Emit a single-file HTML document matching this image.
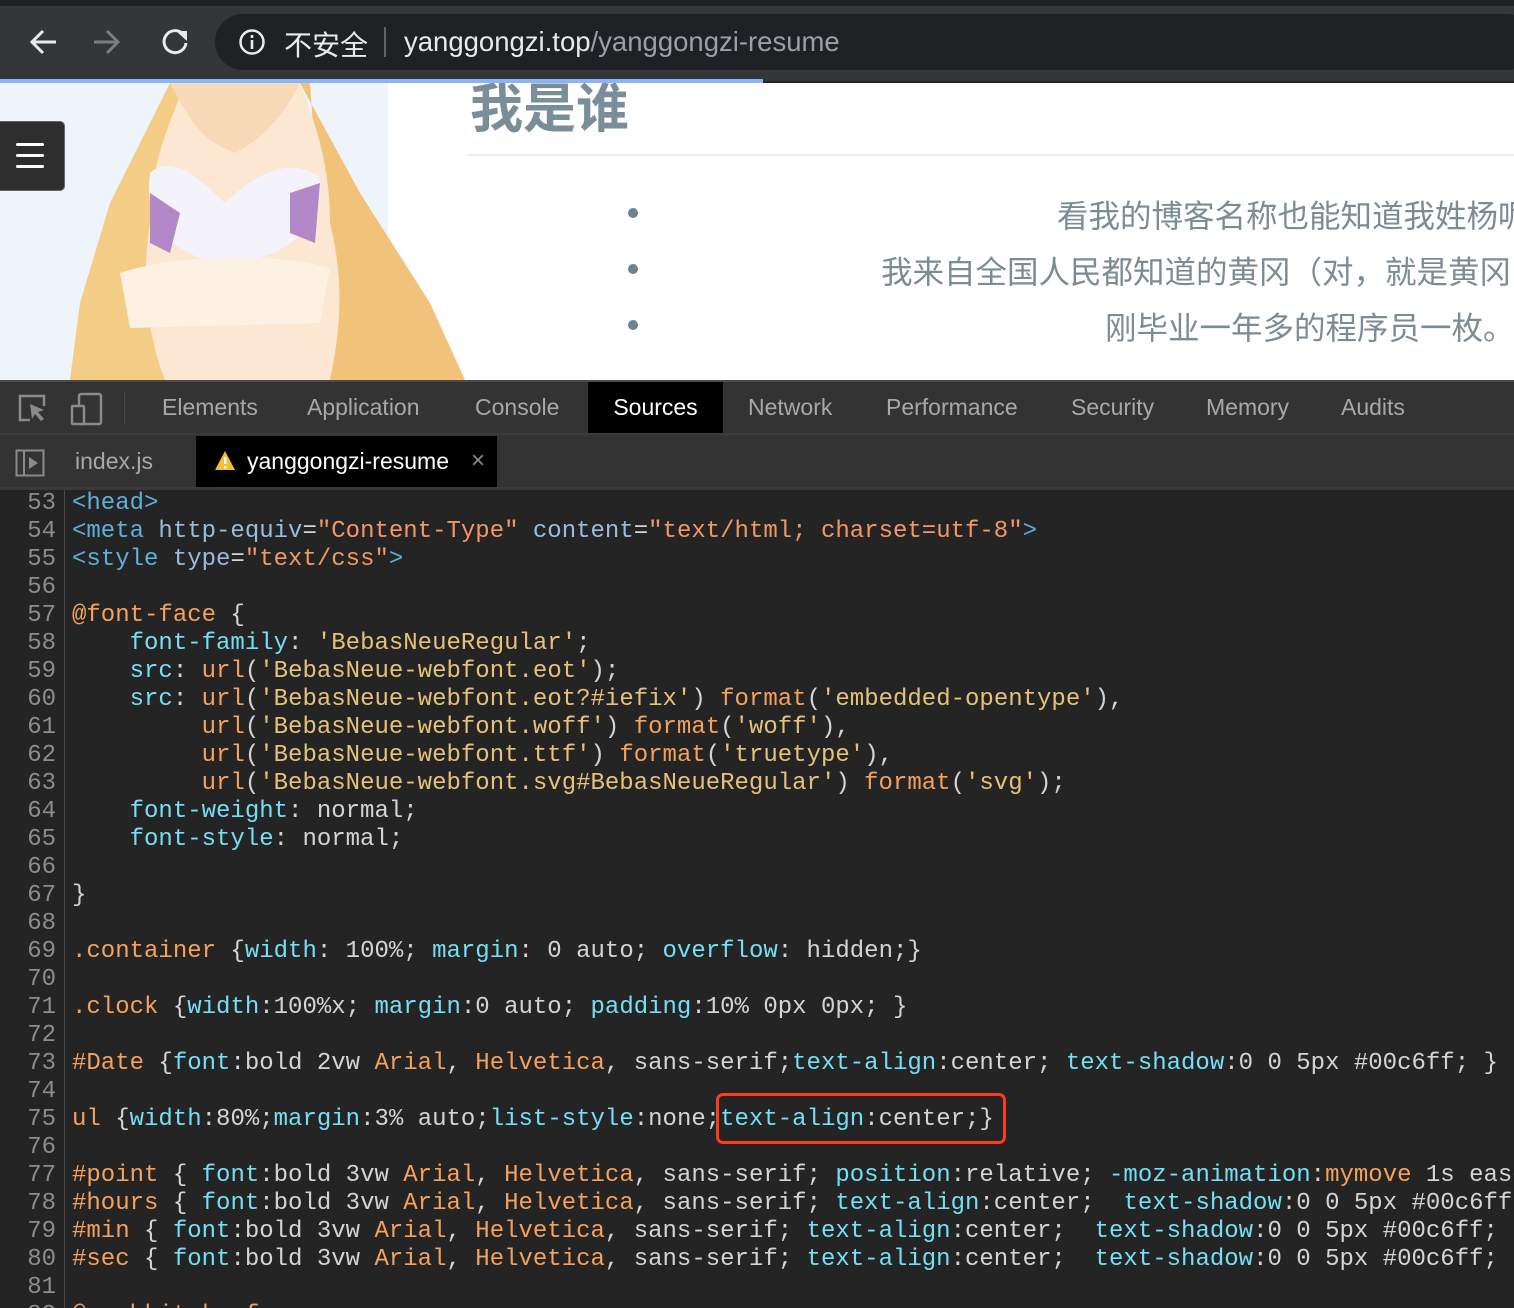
<!DOCTYPE html>
<html><head><meta charset="utf-8"><style>
*{margin:0;padding:0;box-sizing:border-box}
body{width:1514px;height:1308px;overflow:hidden;background:#242424;position:relative;font-family:"Liberation Sans","Noto Sans CJK SC",sans-serif}
.abs{position:absolute}
.top{left:0;top:0;width:1514px;height:80px;background:#35363a}
.page{left:0;top:83px;width:1514px;height:297px;background:#fff;overflow:hidden}
.tab{position:absolute;top:382px;height:51px;line-height:51px;font-size:23px;color:#a8a8a8}
.code{position:absolute;left:0;top:490px;width:1514px;height:818px;font-family:"Liberation Mono",monospace;font-size:24px;overflow:hidden}
.ln{position:absolute;left:0;width:56px;text-align:right;color:#8d8d8d;line-height:28px}
.cl{position:absolute;left:72px;white-space:pre;color:#d4d4d4;line-height:28px}
.t{color:#5db0d7}.a{color:#9bbbdc}.s{color:#f29766}.o{color:#f4a15d}.p{color:#75dff5}.y{color:#e6c17a}
</style></head><body>
<div class="abs top"></div>
<div class="abs" style="left:0;top:0;width:1514px;height:6px;background:#202124"></div>
<div class="abs" style="left:215px;top:14px;width:1320px;height:56px;border-radius:28px;background:#202124"></div>
<svg class="abs" style="left:28px;top:26px" width="170" height="32" viewBox="0 0 170 32">
<path d="M28 16H4M15 5L4 16l11 11" stroke="#e8eaed" stroke-width="3" fill="none"/>
<path d="M66 16h24M79 5l11 11-11 11" stroke="#7b7d80" stroke-width="3" fill="none"/>
<path d="M155 8a11 11 0 1 0 3 9" stroke="#e8eaed" stroke-width="3" fill="none"/><path d="M148 5h11v10z" fill="#e8eaed"/>
</svg>
<svg class="abs" style="left:238px;top:28px" width="28" height="28"><circle cx="14" cy="14" r="11.5" stroke="#e8eaed" stroke-width="2.5" fill="none"/><rect x="12.7" y="12" width="2.6" height="9" fill="#e8eaed"/><rect x="12.7" y="7" width="2.6" height="3" fill="#e8eaed"/></svg>
<div class="abs" style="left:284px;top:24px;font-size:28px;color:#e8eaed">不安全</div>
<div class="abs" style="left:384px;top:27px;width:2px;height:30px;background:#5f6368"></div>
<div class="abs" style="left:404px;top:26px;font-size:27.5px;color:#e8eaed">yanggongzi.top<span style="color:#9aa0a6">/yanggongzi-resume</span></div>
<div class="abs" style="left:0;top:79px;width:763px;height:4px;background:#8ab4f8"></div>
<div class="abs" style="left:763px;top:79px;width:751px;height:2px;background:#35363a"></div>

<div class="abs page">
<div class="abs" style="left:0;top:0;width:388px;height:297px;background:#eef4f9"></div>
<svg class="abs" style="left:0;top:0" width="470" height="297">
<path d="M170 0 L110 120 L80 220 L70 297 L190 297 L180 0Z" fill="#f3cc86"/>
<path d="M300 0 L360 110 L430 220 L465 297 L330 297 L310 0Z" fill="#f0c27a"/>
<path d="M185 0 C170 40 150 80 150 140 C140 200 150 260 165 297 L330 297 C340 250 345 200 330 140 C330 80 315 40 300 0Z" fill="#fbe7d2"/>
<path d="M150 90 C170 70 200 95 225 120 C250 95 290 70 320 95 C325 130 305 160 260 175 L200 175 C160 160 145 130 150 90Z" fill="#f4f2fb"/>
<path d="M150 110 L180 130 L170 170 L150 160Z M290 110 L320 100 L315 160 L290 150Z" fill="#b288c9"/>
<path d="M120 190 C180 170 280 170 330 185 L320 240 L130 245Z" fill="#fdf1e3"/>
<path d="M170 0 C200 60 215 60 235 70 C255 60 280 40 300 0Z" fill="#f7d9b8"/>
</svg>
<div class="abs" style="left:0;top:38px;width:65px;height:70px;background:#2e2e2e;border:1px solid #666;border-left:none;border-radius:0 5px 5px 0"></div>
<div class="abs" style="left:16px;top:60px;width:28px;height:3px;background:#fff;border-radius:2px;box-shadow:0 11px 0 #fff,0 22px 0 #fff"></div>
<div class="abs" style="left:470px;top:-16px;font-size:53px;font-weight:bold;color:#7a8e99">我是谁</div>
<div class="abs" style="left:468px;top:71px;width:1046px;height:2px;background:#ececec"></div>
<div class="abs" style="left:628px;top:125px;width:10px;height:10px;border-radius:50%;background:#6f828c;box-shadow:0 56px 0 #6f828c,0 112px 0 #6f828c"></div>
<div class="abs" style="left:1057px;top:108px;font-size:31.5px;color:#7d8b93;white-space:nowrap">看我的博客名称也能知道我姓杨呢</div>
<div class="abs" style="left:881px;top:164px;font-size:31.5px;color:#7d8b93;white-space:nowrap">我来自全国人民都知道的黄冈（对，就是黄冈</div>
<div class="abs" style="left:1105px;top:220px;font-size:31.5px;color:#7d8b93;white-space:nowrap">刚毕业一年多的程序员一枚。</div>
</div>

<div class="abs" style="left:0;top:380px;width:1514px;height:110px;background:#333"></div>
<div class="abs" style="left:0;top:380px;width:1514px;height:2px;background:#4a4a4a"></div>
<div class="abs" style="left:0;top:433px;width:1514px;height:2px;background:#3c3c3c"></div>
<div class="abs" style="left:0;top:487px;width:1514px;height:3px;background:#3a3a3a"></div>
<svg class="abs" style="left:16px;top:392px" width="90" height="34">
<path d="M14 28H4V4h24v10" stroke="#8a8a8a" stroke-width="2.5" fill="none"/><path d="M14 12l14 6-6 2 6 7-3 2-6-7-3 5z" fill="#8a8a8a"/>
<rect x="63" y="2" width="22" height="30" rx="2" stroke="#8a8a8a" stroke-width="2.5" fill="none"/><rect x="56" y="14" width="12" height="18" rx="1" stroke="#8a8a8a" stroke-width="2.5" fill="#333"/>
</svg>
<div class="abs" style="left:124px;top:392px;width:1px;height:32px;background:#4a4a4a"></div>
<div class="tab" style="left:162px">Elements</div>
<div class="tab" style="left:307px">Application</div>
<div class="tab" style="left:475px">Console</div>
<div class="tab" style="left:588px;width:135px;background:#000;color:#fff;text-align:center">Sources</div>
<div class="tab" style="left:748px">Network</div>
<div class="tab" style="left:886px">Performance</div>
<div class="tab" style="left:1071px">Security</div>
<div class="tab" style="left:1206px">Memory</div>
<div class="tab" style="left:1341px">Audits</div>
<svg class="abs" style="left:15px;top:449px" width="30" height="28"><rect x="1.5" y="1.5" width="27" height="25" stroke="#8a8a8a" stroke-width="2" fill="none"/><line x1="9" y1="2" x2="9" y2="26" stroke="#8a8a8a" stroke-width="2"/><path d="M14 8l9 6-9 6z" fill="#8a8a8a"/></svg>
<div class="abs" style="left:75px;top:436px;line-height:51px;font-size:23px;color:#a8a8a8">index.js</div>
<div class="abs" style="left:196px;top:436px;width:301px;height:51px;background:#000"></div>
<svg class="abs" style="left:214px;top:450px" width="22" height="22"><path d="M11 1L21 20H1z" fill="#f2c12e"/><rect x="10" y="7" width="2.4" height="7" fill="#fff"/><rect x="10" y="16" width="2.4" height="2.4" fill="#fff"/></svg>
<div class="abs" style="left:247px;top:436px;line-height:51px;font-size:23px;color:#fff">yanggongzi-resume</div>
<div class="abs" style="left:471px;top:436px;line-height:49px;font-size:24px;color:#8a8a8a">×</div>

<div class="code">
<div class="abs" style="left:64px;top:0;width:1px;height:820px;background:#4a4a4a"></div>
<div class="ln" style="top:0">53<br>54<br>55<br>56<br>57<br>58<br>59<br>60<br>61<br>62<br>63<br>64<br>65<br>66<br>67<br>68<br>69<br>70<br>71<br>72<br>73<br>74<br>75<br>76<br>77<br>78<br>79<br>80<br>81<br>82</div>
<div class="cl" style="top:0"><span class="t">&lt;head&gt;</span>
<span class="t">&lt;meta</span> <span class="a">http-equiv</span>=<span class="s">"Content-Type"</span> <span class="a">content</span>=<span class="s">"text/html; charset=utf-8"</span><span class="t">&gt;</span>
<span class="t">&lt;style</span> <span class="a">type</span>=<span class="s">"text/css"</span><span class="t">&gt;</span>

<span class="o">@font-face</span> {
    <span class="p">font-family</span>: <span class="y">'BebasNeueRegular'</span>;
    <span class="p">src</span>: <span class="o">url</span>(<span class="y">'BebasNeue-webfont.eot'</span>);
    <span class="p">src</span>: <span class="o">url</span>(<span class="y">'BebasNeue-webfont.eot?#iefix'</span>) <span class="o">format</span>(<span class="y">'embedded-opentype'</span>),
         <span class="o">url</span>(<span class="y">'BebasNeue-webfont.woff'</span>) <span class="o">format</span>(<span class="y">'woff'</span>),
         <span class="o">url</span>(<span class="y">'BebasNeue-webfont.ttf'</span>) <span class="o">format</span>(<span class="y">'truetype'</span>),
         <span class="o">url</span>(<span class="y">'BebasNeue-webfont.svg#BebasNeueRegular'</span>) <span class="o">format</span>(<span class="y">'svg'</span>);
    <span class="p">font-weight</span>: normal;
    <span class="p">font-style</span>: normal;

}

<span class="o">.container</span> {<span class="p">width</span>: 100%; <span class="p">margin</span>: 0 auto; <span class="p">overflow</span>: hidden;}

<span class="o">.clock</span> {<span class="p">width</span>:100%x; <span class="p">margin</span>:0 auto; <span class="p">padding</span>:10% 0px 0px; }

<span class="o">#Date</span> {<span class="p">font</span>:bold 2vw <span class="o">Arial</span>, <span class="o">Helvetica</span>, sans-serif;<span class="p">text-align</span>:center; <span class="p">text-shadow</span>:0 0 5px #00c6ff; }

<span class="o">ul</span> {<span class="p">width</span>:80%;<span class="p">margin</span>:3% auto;<span class="p">list-style</span>:none;<span class="p">text-align</span>:center;}

<span class="o">#point</span> { <span class="p">font</span>:bold 3vw <span class="o">Arial</span>, <span class="o">Helvetica</span>, sans-serif; <span class="p">position</span>:relative; <span class="p">-moz-animation</span>:<span class="o">mymove</span> 1s ease
<span class="o">#hours</span> { <span class="p">font</span>:bold 3vw <span class="o">Arial</span>, <span class="o">Helvetica</span>, sans-serif; <span class="p">text-align</span>:center;  <span class="p">text-shadow</span>:0 0 5px #00c6ff;
<span class="o">#min</span> { <span class="p">font</span>:bold 3vw <span class="o">Arial</span>, <span class="o">Helvetica</span>, sans-serif; <span class="p">text-align</span>:center;  <span class="p">text-shadow</span>:0 0 5px #00c6ff;
<span class="o">#sec</span> { <span class="p">font</span>:bold 3vw <span class="o">Arial</span>, <span class="o">Helvetica</span>, sans-serif; <span class="p">text-align</span>:center;  <span class="p">text-shadow</span>:0 0 5px #00c6ff;

<span class="o">@-webkit-keyframes</span></div>
<div class="abs" style="left:716px;top:603px;width:290px;height:51px;border:3px solid #ff3b1f;border-radius:7px"></div>
</div>
</body></html>
